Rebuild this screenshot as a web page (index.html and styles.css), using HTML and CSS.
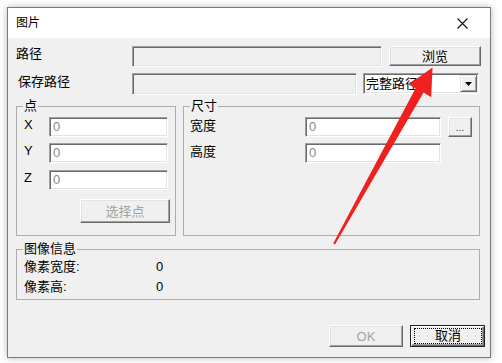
FILE: index.html
```html
<!DOCTYPE html>
<html lang="zh-CN">
<head>
<meta charset="utf-8">
<title>图片</title>
<link rel="stylesheet" href="styles.css">
</head>
<body>
<div class="window">
  <div class="titlebar">
    <span class="title">图片</span>
    <svg class="close" width="11" height="11" viewBox="0 0 11 11"><path d="M0.5 0.5 L10.5 10.5 M10.5 0.5 L0.5 10.5" stroke="#111" stroke-width="1.1" fill="none"/></svg>
  </div>
  <div class="content">
    <div class="row row1">
      <span class="lbl lbl-main">路径</span>
      <div class="edit edit-disabled w-path1"></div>
      <button class="btn w-browse">浏览</button>
    </div>
    <div class="row row2">
      <span class="lbl lbl-main lbl-save">保存路径</span>
      <div class="edit edit-disabled w-path2"></div>
      <div class="combo">
        <span class="combo-text">完整路径</span>
        <span class="combo-btn"><svg width="7" height="4" viewBox="0 0 7 4"><path d="M0 0 H7 L3.5 4 Z" fill="#000"/></svg></span>
      </div>
    </div>
    <div class="groups">
      <fieldset class="group g-point">
        <legend>点</legend>
        <div class="frow"><span class="lbl lbl-xyz">X</span><div class="edit w-xyz">0</div></div>
        <div class="frow"><span class="lbl lbl-xyz">Y</span><div class="edit w-xyz">0</div></div>
        <div class="frow frow-z"><span class="lbl lbl-xyz">Z</span><div class="edit w-xyz">0</div></div>
        <button class="btn btn-disabled w-pick">选择点</button>
      </fieldset>
      <fieldset class="group g-size">
        <legend>尺寸</legend>
        <div class="frow"><span class="lbl lbl-size">宽度</span><div class="edit w-size">0</div><button class="btn w-dots">...</button></div>
        <div class="frow"><span class="lbl lbl-size">高度</span><div class="edit w-size">0</div></div>
      </fieldset>
    </div>
    <fieldset class="group g-info">
      <legend>图像信息</legend>
      <div class="irow"><span class="ilbl">像素宽度:</span><span>0</span></div>
      <div class="irow"><span class="ilbl">像素高:</span><span>0</span></div>
    </fieldset>
    <div class="actions">
      <button class="btn btn-disabled w-ok">OK</button>
      <button class="btn btn-default w-cancel"><span class="focus">取消</span></button>
    </div>
  </div>
</div>
<svg class="arrow" width="502" height="363" viewBox="0 0 502 363">
  <polygon points="333.2,243.6 415.6,88.2 408.4,84.6 432.5,67.5 431.2,97.2 423.6,92.6 335.0,244.6" fill="#f02020"/>
</svg>
</body>
</html>
```

FILE: styles.css
```css
* { box-sizing: border-box; }
html, body { margin: 0; padding: 0; }
body {
  position: relative;
  width: 502px;
  height: 363px;
  overflow: hidden;
  background: #fff;
  font-family: "Liberation Sans", "Noto Sans CJK SC", sans-serif;
  font-size: 13px;
  color: #000;
}
.window {
  margin: 7px 0 0 7px;
  width: 484px;
  height: 351px;
  border: 1px solid #7a7a7a;
  box-shadow: 0 0 7px rgba(0,0,0,0.28);
  display: flex;
  flex-direction: column;
  background: #f0f0f0;
}
.titlebar {
  height: 30px;
  background: #fff;
  display: flex;
  align-items: center;
  justify-content: space-between;
  padding: 0 22px 0 8px;
}
.title { font-size: 12px; line-height: 14px; }
.close { display: block; }
.content {
  flex: 1;
  display: flex;
  flex-direction: column;
  background: #f0f0f0;
}
.row { display: flex; padding-left: 8px; align-items: flex-start; }
.row1 { margin-top: 8px; }
.row2 { margin-top: 6px; }
.lbl { line-height: 15px; white-space: nowrap; }
.lbl-main { width: 116px; }
.lbl-save { padding-left: 2px; padding-top: 1px; }
.edit {
  border: 1px solid;
  border-color: #a0a0a0 #fff #fff #a0a0a0;
  box-shadow: inset 1px 1px #696969, inset -1px -1px #e3e3e3;
  background: #fff;
  color: #8a8a8a;
  padding: 1px 0 0 3px;
  line-height: 16px;
  height: 20px;
}
.edit-disabled { background: #f0f0f0; }
.w-path1 { width: 250px; height: 21px; }
.w-path2 { width: 225px; height: 22px; }
.btn {
  font: inherit;
  margin: 0;
  padding: 0;
  background: #f0f0f0;
  color: #000;
  border: 1px solid;
  border-color: #fff #696969 #696969 #fff;
  box-shadow: inset -1px -1px #a0a0a0, inset 1px 1px #e3e3e3;
  line-height: 15px;
  display: flex;
  align-items: center;
  justify-content: center;
}
.btn-disabled { color: #a3a3a3; }
.w-browse { width: 92px; height: 20px; margin-left: 7px; }
.combo {
  margin-left: 6px;
  width: 116px;
  height: 21px;
  display: flex;
  border: 1px solid;
  border-color: #a0a0a0 #fff #fff #a0a0a0;
  box-shadow: inset 1px 1px #696969, inset -1px -1px #e3e3e3;
  background: #fff;
  padding: 1px 1px 1px 1px;
}
.combo-text { flex: 1; line-height: 17px; padding-left: 1px; overflow: hidden; white-space: nowrap; }
.combo-btn {
  width: 17px;
  display: flex;
  align-items: center;
  justify-content: center;
  background: #f0f0f0;
  border: 1px solid;
  border-color: #e3e3e3 #696969 #696969 #e3e3e3;
  box-shadow: inset 1px 1px #fff, inset -1px -1px #a0a0a0;
}
.combo-btn svg { display: block; }
.groups { display: flex; gap: 7px; padding-left: 8px; margin-top: 4px; }
.group {
  margin: 0;
  border: 1px solid #adadad;
  padding: 4px 6px 0 6px;
  min-width: 0;
}
.group legend { padding: 0 1px; line-height: 14px; }
.g-point { width: 160px; height: 137px; }
.g-size { width: 297px; height: 137px; }
.frow { display: flex; align-items: flex-start; }
.frow + .frow { margin-top: 6px; }
.frow-z { margin-top: 7px !important; }
.lbl-xyz { width: 26px; padding-left: 1px; }
.w-xyz { width: 119px; }
.w-pick { width: 90px; height: 24px; margin: 9px 0 0 57px; }
.lbl-size { width: 115px; padding-top: 1px; }
.w-size { width: 136px; }
.w-dots { width: 24px; height: 20px; margin-left: 7px; font-size: 10px; color: #444; align-items: flex-end; padding-bottom: 3px; line-height: 10px; }
.g-info { margin: 6px 0 0 8px; width: 464px; height: 58px; padding-top: 1px; }
.irow { display: flex; line-height: 20px; }
.ilbl { width: 133px; padding-left: 1px; }
.actions { display: flex; justify-content: flex-end; gap: 7px; padding-right: 5px; margin-top: 25px; }
.w-ok { width: 74px; height: 22px; }
.w-cancel { width: 75px; height: 22px; }
.btn-default {
  border: 1px solid #202020;
  box-shadow: inset 1px 1px #fff, inset -1px -1px #696969, inset -2px -2px #a0a0a0;
  padding: 2px 2px 2px 3px;
  align-items: stretch;
}
.focus {
  flex: 1;
  border: 1px dotted #000;
  display: flex;
  align-items: center;
  justify-content: center;
  line-height: 14px;
}
.arrow { position: absolute; left: 0; top: 0; pointer-events: none; }
```
